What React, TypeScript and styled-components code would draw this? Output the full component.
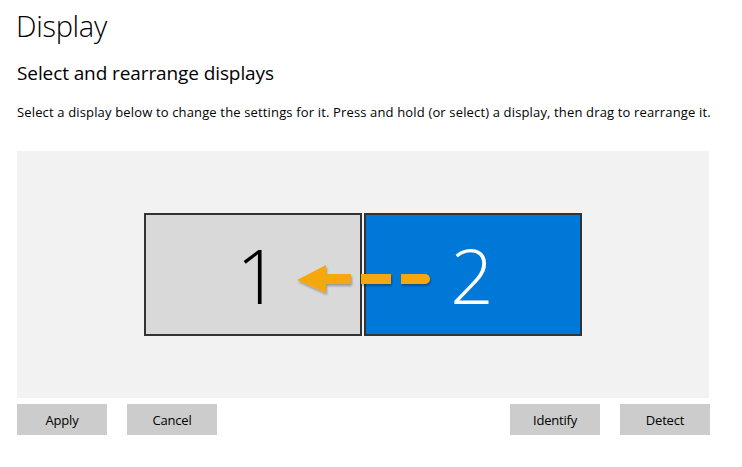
import React from "react";
import styled, { createGlobalStyle } from "styled-components";

const GlobalStyle = createGlobalStyle`
  html, body {
    margin: 0;
    padding: 0;
    background: #ffffff;
  }
  body {
    font-family: "Segoe UI", "Open Sans", "Noto Sans", sans-serif;
    color: #000000;
  }
`;

const App: React.FC = () => {
  return (
    <>
      <GlobalStyle />
      <PageS>
        <TitleS>Display</TitleS>
        <SubtitleS>Select and rearrange displays</SubtitleS>
        <HintS>
          Select a display below to change the settings for it. Press and hold
          (or select) a display, then drag to rearrange it.
        </HintS>
        <CanvasS>
          <MonitorsS>
            <MonitorS>1</MonitorS>
            <MonitorS selected>2</MonitorS>
            <ArrowS width="140" height="40" viewBox="0 0 140 40">
              <defs>
                <filter id="sh" x="-10%" y="-30%" width="120%" height="160%">
                  <feDropShadow dx="1" dy="2" stdDeviation="1.2" floodColor="#000" floodOpacity="0.3" />
                </filter>
              </defs>
              <g fill="#f5a80c" filter="url(#sh)">
                <path d="M3 16 L32 1 L32 29 Z" />
                <rect x="31" y="10" width="26" height="10" />
                <rect x="67" y="10" width="30" height="10" />
                <path d="M107 10 H131 A5 5 0 0 1 131 20 H107 Z" />
              </g>
            </ArrowS>
          </MonitorsS>
        </CanvasS>
        <ActionsS>
          <GroupS>
            <ButtonS>Apply</ButtonS>
            <ButtonS>Cancel</ButtonS>
          </GroupS>
          <GroupS>
            <ButtonS>Identify</ButtonS>
            <ButtonS>Detect</ButtonS>
          </GroupS>
        </ActionsS>
      </PageS>
    </>
  );
};

export default App;

const PageS = styled.div`
  width: 742px;
  height: 467px;
  box-sizing: border-box;
  padding: 6px 32px 0 17px;
  display: flex;
  flex-direction: column;
`;

const TitleS = styled.h1`
  margin: 0 0 0 -1px;
  font-size: 29px;
  font-weight: 300;
  line-height: 40px;
  letter-spacing: -0.3px;
`;

const SubtitleS = styled.h2`
  margin: 14px 0 0 0;
  font-size: 19px;
  font-weight: 400;
  line-height: 26px;
  letter-spacing: -0.1px;
`;

const HintS = styled.p`
  margin: 17px 0 0 0;
  font-size: 13px;
  line-height: 18px;
  white-space: nowrap;
  letter-spacing: 0.15px;
`;

const CanvasS = styled.div`
  margin-top: 30px;
  width: 692px;
  height: 247px;
  background: #f2f2f2;
  display: flex;
  justify-content: center;
  align-items: center;
`;

const MonitorsS = styled.div`
  position: relative;
  display: flex;
  gap: 2px;
`;

const MonitorS = styled.div<{ selected?: boolean }>`
  width: 218px;
  height: 123px;
  box-sizing: border-box;
  border: 2px solid #333333;
  background: ${(p) => (p.selected ? "#0078d7" : "#d9d9d9")};
  color: ${(p) => (p.selected ? "#ffffff" : "#000000")};
  display: flex;
  align-items: center;
  justify-content: center;
  font-size: 76px;
  font-weight: 300;
  line-height: 1;
  padding-top: 0;
  padding-left: ${(p) => (p.selected ? "0" : "10px")};
  padding-right: ${(p) => (p.selected ? "2px" : "0")};
`;

const ArrowS = styled.svg`
  position: absolute;
  left: 150px;
  top: 51px;
`;

const ActionsS = styled.div`
  margin-top: 6px;
  width: 693px;
  display: flex;
  justify-content: space-between;
`;

const GroupS = styled.div`
  display: flex;
  gap: 20px;
`;

const ButtonS = styled.button`
  width: 90px;
  height: 31px;
  border: none;
  border-radius: 0;
  background: #cccccc;
  color: #000000;
  font-family: "Segoe UI", "Open Sans", "Noto Sans", sans-serif;
  font-size: 13px;
  padding: 0;
  letter-spacing: -0.2px;
`;
